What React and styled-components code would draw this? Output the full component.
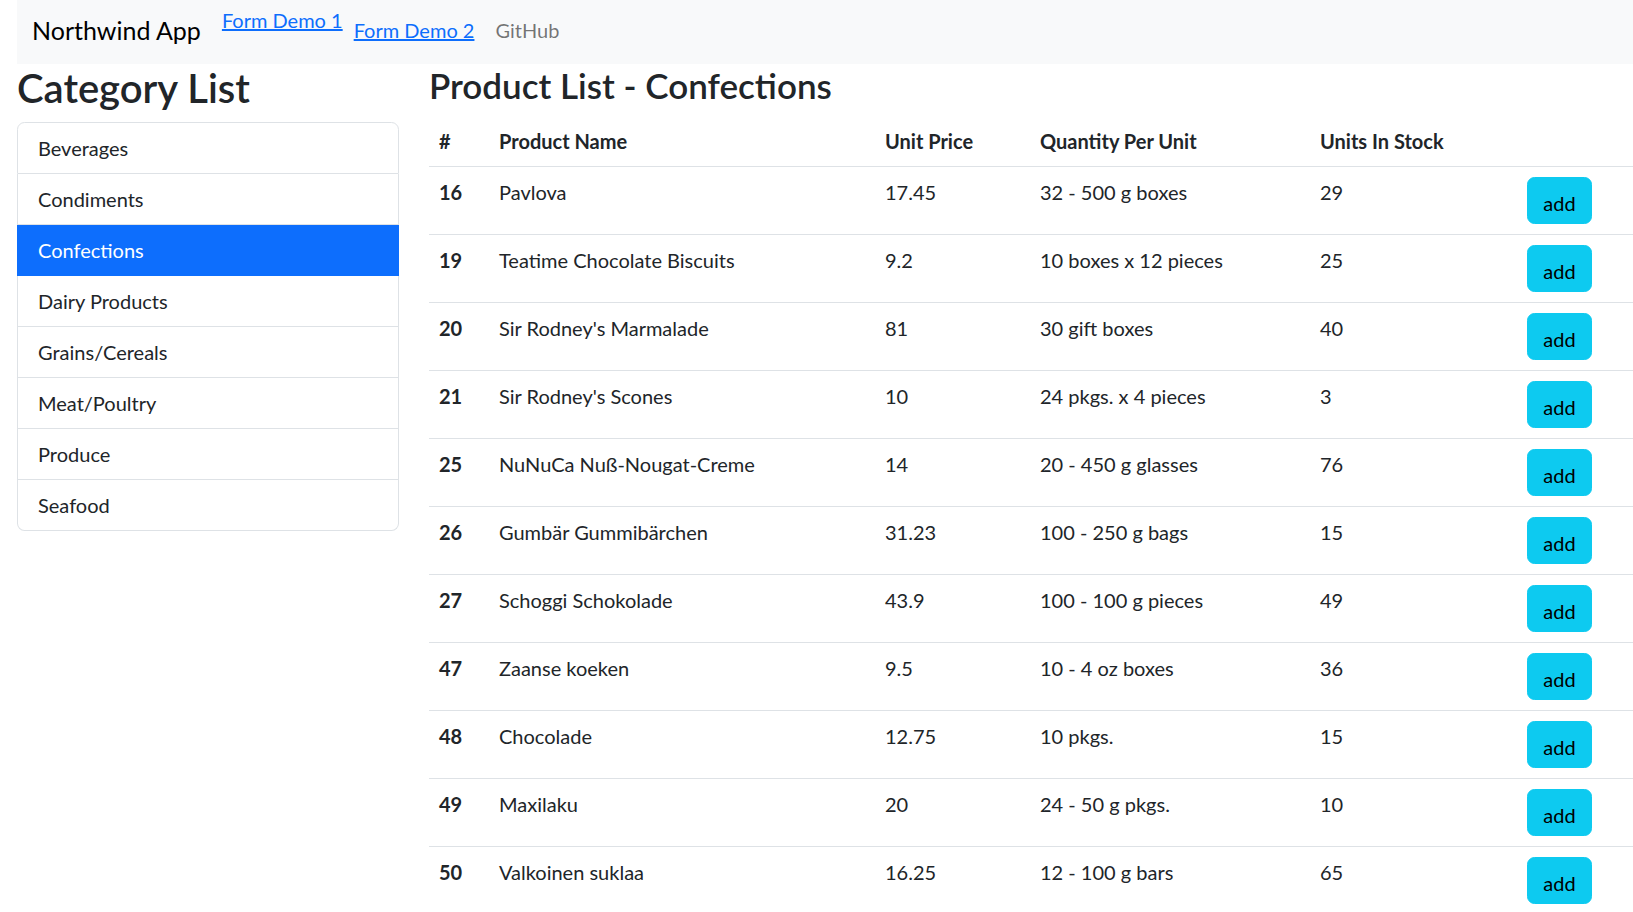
import React, { useState } from 'react';
import styled, { createGlobalStyle } from 'styled-components';

const GlobalStyle = createGlobalStyle`
  body {
    margin: 0;
    background: #fff;
    color: #212529;
    font-family: Lato, "Noto Sans", sans-serif;
    font-size: 20px;
    overflow: hidden;
  }
`;

const Page = styled.div`
  padding-left: 17px;
  width: 1616px;
`;

const NavBar = styled.nav`
  box-sizing: border-box;
  background-color: #f8f9fa;
  height: 64px;
  display: flex;
  align-items: center;
  padding: 0 15px 5px;
`;

const Brand = styled.span`
  font-size: 25px;
  color: #000;
  margin-right: 21px;
  line-height: 38px;
`;

const NavLink = styled.a`
  font-size: 20px;
  line-height: 30px;
  color: ${p => (p.$muted ? 'rgba(0, 0, 0, 0.55)' : '#0d6efd')};
  text-decoration: ${p => (p.$muted ? 'none' : 'underline')};
  margin-right: ${p => p.$gap || 11}px;
  align-self: ${p => (p.$raised ? 'flex-start' : 'center')};
  margin-top: ${p => (p.$raised ? 5 : 0)}px;
  cursor: pointer;
`;

const Content = styled.div`
  display: grid;
  grid-template-columns: 382px 1fr;
  column-gap: 30px;
`;

const Title = styled.h2`
  margin: 0 0 10px;
  font-size: ${p => p.$size}px;
  font-weight: 600;
  line-height: 1.2;
  color: #212529;
`;

const ListGroup = styled.div`
  display: flex;
  flex-direction: column;
`;

const ListItem = styled.div`
  padding: 10px 20px;
  line-height: 30px;
  font-size: 20px;
  border: 1px solid ${p => (p.$active ? '#0d6efd' : '#dee2e6')};
  border-top-width: ${p => (p.$first ? 1 : 0)}px;
  background: ${p => (p.$active ? '#0d6efd' : '#fff')};
  color: ${p => (p.$active ? '#fff' : '#212529')};
  border-radius: ${p => (p.$first ? '7.5px 7.5px 0 0' : p.$last ? '0 0 7.5px 7.5px' : '0')};
  cursor: pointer;
`;

const Table = styled.table`
  width: 100%;
  border-collapse: collapse;
  table-layout: fixed;
  font-size: 20px;
  color: #212529;
`;

const HeadCell = styled.th`
  text-align: left;
  font-weight: 700;
  padding: 10px;
  line-height: 30px;
  vertical-align: top;
  border-bottom: 1px solid #dee2e6;
  width: ${p => (p.$w ? `${p.$w - 20}px` : 'auto')};
`;

const Cell = styled.td`
  padding: 10px;
  line-height: 30px;
  vertical-align: top;
  border-bottom: 1px solid #dee2e6;
  font-weight: ${p => (p.$bold ? 700 : 400)};
`;

const AddButton = styled.button`
  width: 65px;
  height: 47px;
  padding: 4px 0 0;
  border: 1px solid #0dcaf0;
  border-radius: 7.5px;
  background: #0dcaf0;
  color: #000;
  font-family: inherit;
  font-size: 20px;
  line-height: 30px;
  cursor: pointer;
`;

const categories = [
  'Beverages',
  'Condiments',
  'Confections',
  'Dairy Products',
  'Grains/Cereals',
  'Meat/Poultry',
  'Produce',
  'Seafood',
];

const products = [
  [16, 'Pavlova', '17.45', '32 - 500 g boxes', 29],
  [19, 'Teatime Chocolate Biscuits', '9.2', '10 boxes x 12 pieces', 25],
  [20, "Sir Rodney's Marmalade", '81', '30 gift boxes', 40],
  [21, "Sir Rodney's Scones", '10', '24 pkgs. x 4 pieces', 3],
  [25, 'NuNuCa Nuß-Nougat-Creme', '14', '20 - 450 g glasses', 76],
  [26, 'Gumbär Gummibärchen', '31.23', '100 - 250 g bags', 15],
  [27, 'Schoggi Schokolade', '43.9', '100 - 100 g pieces', 49],
  [47, 'Zaanse koeken', '9.5', '10 - 4 oz boxes', 36],
  [48, 'Chocolade', '12.75', '10 pkgs.', 15],
  [49, 'Maxilaku', '20', '24 - 50 g pkgs.', 10],
  [50, 'Valkoinen suklaa', '16.25', '12 - 100 g bars', 65],
];

function App() {
  const [current, setCurrent] = useState('Confections');

  return (
    <Page>
      <GlobalStyle />
      <NavBar>
        <Brand>Northwind App</Brand>
        <NavLink $raised>Form Demo 1</NavLink>
        <NavLink $gap={21}>Form Demo 2</NavLink>
        <NavLink $muted>GitHub</NavLink>
      </NavBar>
      <Content>
        <div>
          <Title $size={40}>Category List</Title>
          <ListGroup>
            {categories.map((c, i) => (
              <ListItem
                key={c}
                $first={i === 0}
                $last={i === categories.length - 1}
                $active={c === current}
                onClick={() => setCurrent(c)}
              >
                {c}
              </ListItem>
            ))}
          </ListGroup>
        </div>
        <div>
          <Title as="h3" $size={35}>Product List - {current}</Title>
          <Table>
            <thead>
              <tr>
                <HeadCell $w={60}>#</HeadCell>
                <HeadCell $w={386}>Product Name</HeadCell>
                <HeadCell $w={155}>Unit Price</HeadCell>
                <HeadCell $w={280}>Quantity Per Unit</HeadCell>
                <HeadCell $w={207}>Units In Stock</HeadCell>
                <HeadCell></HeadCell>
              </tr>
            </thead>
            <tbody>
              {products.map(p => (
                <tr key={p[0]}>
                  <Cell $bold>{p[0]}</Cell>
                  <Cell>{p[1]}</Cell>
                  <Cell>{p[2]}</Cell>
                  <Cell>{p[3]}</Cell>
                  <Cell>{p[4]}</Cell>
                  <Cell>
                    <AddButton>add</AddButton>
                  </Cell>
                </tr>
              ))}
            </tbody>
          </Table>
        </div>
      </Content>
    </Page>
  );
}

export default App;
